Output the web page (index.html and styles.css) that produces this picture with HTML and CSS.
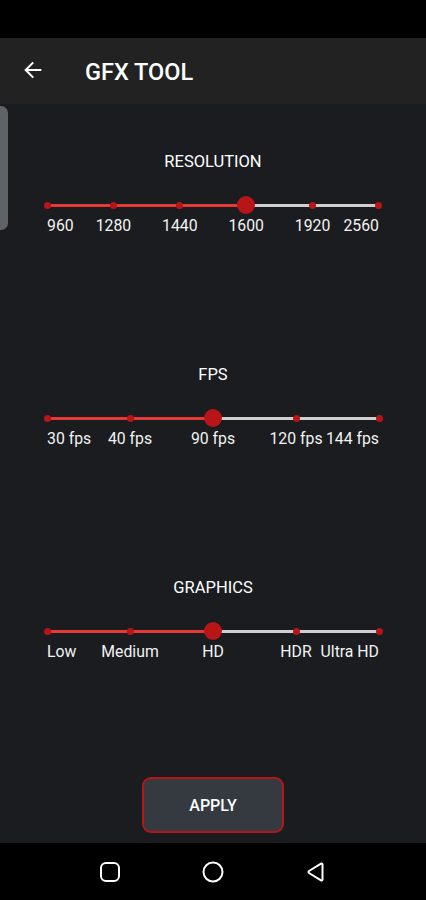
FILE: index.html
```html
<!DOCTYPE html>
<html lang="en">
<head>
    <meta charset="UTF-8">
    <meta name="viewport" content="width=device-width, initial-scale=1.0">
    <title>GFX Tool</title>
    <link rel="stylesheet" href="styles.css">
</head>
<body>
    <div class="phone">
        <div class="status-bar"></div>

        <!-- Barra superior -->
        <header class="app-bar">
            <svg class="back" width="22" height="22" viewBox="0 0 24 24">
                <path d="M20 12H4.5M11.5 4.5L4 12l7.5 7.5" fill="none" stroke="#fff" stroke-width="2.2" stroke-linecap="square"/>
            </svg>
            <h1>GFX TOOL</h1>
        </header>

        <main class="content">
            <div class="side-tab"></div>

            <!-- Resolución -->
            <section class="setting">
                <h2>RESOLUTION</h2>
                <div class="track" style="--fill: 60%">
                    <span class="stop"><i class="dot"></i></span>
                    <span class="stop"><i class="dot"></i></span>
                    <span class="stop"><i class="dot"></i></span>
                    <span class="stop"><i class="thumb"></i></span>
                    <span class="stop"><i class="dot"></i></span>
                    <span class="stop"><i class="dot"></i></span>
                </div>
                <div class="labels">
                    <span class="stop"><b>960</b></span>
                    <span class="stop"><b>1280</b></span>
                    <span class="stop"><b>1440</b></span>
                    <span class="stop"><b>1600</b></span>
                    <span class="stop"><b>1920</b></span>
                    <span class="stop"><b>2560</b></span>
                </div>
            </section>

            <!-- FPS -->
            <section class="setting">
                <h2>FPS</h2>
                <div class="track" style="--fill: 50%">
                    <span class="stop"><i class="dot"></i></span>
                    <span class="stop"><i class="dot"></i></span>
                    <span class="stop"><i class="thumb"></i></span>
                    <span class="stop"><i class="dot"></i></span>
                    <span class="stop"><i class="dot"></i></span>
                </div>
                <div class="labels">
                    <span class="stop"><b>30 fps</b></span>
                    <span class="stop"><b>40 fps</b></span>
                    <span class="stop"><b>90 fps</b></span>
                    <span class="stop"><b>120 fps</b></span>
                    <span class="stop"><b>144 fps</b></span>
                </div>
            </section>

            <!-- Gráficos -->
            <section class="setting">
                <h2>GRAPHICS</h2>
                <div class="track" style="--fill: 50%">
                    <span class="stop"><i class="dot"></i></span>
                    <span class="stop"><i class="dot"></i></span>
                    <span class="stop"><i class="thumb"></i></span>
                    <span class="stop"><i class="dot"></i></span>
                    <span class="stop"><i class="dot"></i></span>
                </div>
                <div class="labels">
                    <span class="stop"><b>Low</b></span>
                    <span class="stop"><b>Medium</b></span>
                    <span class="stop"><b>HD</b></span>
                    <span class="stop"><b>HDR</b></span>
                    <span class="stop"><b>Ultra HD</b></span>
                </div>
            </section>

            <div class="actions">
                <button class="apply">APPLY</button>
            </div>
        </main>

        <!-- Navegación del sistema -->
        <nav class="nav-bar">
            <svg width="22" height="22" viewBox="0 0 22 22">
                <rect x="2" y="2" width="18" height="18" rx="5" fill="none" stroke="#fff" stroke-width="2"/>
            </svg>
            <svg width="22" height="22" viewBox="0 0 22 22">
                <circle cx="11" cy="11" r="9.5" fill="none" stroke="#fff" stroke-width="2"/>
            </svg>
            <svg width="22" height="22" viewBox="0 0 22 22">
                <path d="M17.5 3.5v15a1 1 0 0 1-1.5.9L4 12a1.2 1.2 0 0 1 0-2l12-7.4a1 1 0 0 1 1.5.9z" fill="none" stroke="#fff" stroke-width="2" stroke-linejoin="round"/>
            </svg>
        </nav>
    </div>
</body>
</html>
```

FILE: styles.css
```css
* {
    box-sizing: border-box;
}
body {
    margin: 0;
    font-family: Roboto, 'Noto Sans', sans-serif;
    background: #000;
    color: #fff;
}
.phone {
    width: 426px;
    height: 900px;
    display: flex;
    flex-direction: column;
    overflow: hidden;
}
.status-bar {
    flex: none;
    height: 38px;
    background: #000;
}
.app-bar {
    flex: none;
    height: 66px;
    background: #222222;
    display: flex;
    align-items: center;
    padding-left: 22px;
}
.app-bar .back {
    margin-top: -2px;
}
.app-bar h1 {
    margin: 2px 0 0 41px;
    font-size: 23.5px;
    font-weight: 500;
}
.content {
    flex: 1;
    min-height: 0;
    position: relative;
    background: #1a1c1f;
    display: flex;
    flex-direction: column;
    padding-top: 47px;
}
.side-tab {
    position: absolute;
    left: 0;
    top: 2px;
    width: 8px;
    height: 124px;
    background: #5f6266;
    border-radius: 0 7px 7px 0;
}
.setting {
    flex: none;
    padding: 0 47px;
    margin-bottom: 129px;
}
.setting:last-of-type {
    margin-bottom: 0;
}
.setting h2 {
    margin: 0 0 23px;
    height: 22px;
    line-height: 22px;
    font-size: 16.5px;
    font-weight: 400;
    text-align: center;
}
.track,
.labels {
    display: flex;
    justify-content: space-between;
}
.track {
    height: 18px;
    align-items: center;
    background:
        linear-gradient(to right, #e53935 var(--fill), #cfcfcf var(--fill))
        center / 100% 3px no-repeat;
}
.labels {
    margin-top: 3px;
    height: 18px;
}
.stop {
    width: 0;
    display: flex;
    justify-content: center;
    align-items: center;
}
.labels .stop:first-child {
    justify-content: flex-start;
}
.labels .stop:last-child {
    justify-content: flex-end;
}
.dot,
.thumb {
    flex: none;
    border-radius: 50%;
    background: #b71518;
}
.dot {
    width: 7px;
    height: 7px;
}
.thumb {
    width: 18px;
    height: 18px;
}
.labels b {
    flex: none;
    font-weight: 400;
    font-size: 15.8px;
    line-height: 18px;
    white-space: nowrap;
    color: #f2f2f2;
}
.actions {
    margin-top: auto;
    padding-bottom: 10px;
    display: flex;
    justify-content: center;
}
.apply {
    width: 142px;
    height: 56px;
    border: 2px solid #b71518;
    border-radius: 9px;
    background: #343a40;
    color: #fff;
    font-family: inherit;
    font-size: 16px;
    font-weight: 500;
}
.nav-bar {
    flex: none;
    height: 57px;
    background: #000;
    display: flex;
    justify-content: center;
    align-items: center;
    gap: 81px;
}
```
